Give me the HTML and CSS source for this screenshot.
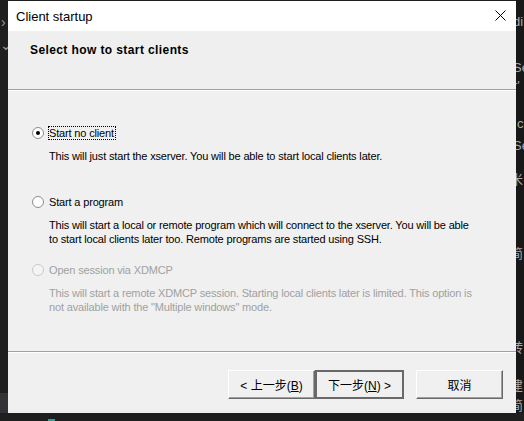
FILE: index.html
```html
<!DOCTYPE html>
<html>
<head>
<meta charset="utf-8">
<link rel="stylesheet" href="styles.css">
</head>
<body>
<div class="desktop">
  <div class="left-strip">
    <span class="chev">&#x203A;</span>
    <span class="chev down">&#x2304;</span>
    <span class="left-block"></span>
  </div>
  <div class="dialog">
    <div class="titlebar">
      <span class="title">Client startup</span>
      <svg class="close" width="11" height="11" viewBox="0 0 11 11"><path d="M0.5 0.5L10.5 10.5M10.5 0.5L0.5 10.5" stroke="#000" stroke-width="1"/></svg>
    </div>
    <div class="header">
      <div class="heading">Select how to start clients</div>
    </div>
    <div class="content">
      <div class="option o1">
        <div class="opt-row">
          <span class="radio checked"></span>
          <span class="label focus">Start no client</span>
        </div>
        <p class="desc">This will just start the xserver. You will be able to start local clients later.</p>
      </div>
      <div class="option o2">
        <div class="opt-row">
          <span class="radio"></span>
          <span class="label">Start a program</span>
        </div>
        <p class="desc">This will start a local or remote program which will connect to the xserver. You will be able<br>to start local clients later too. Remote programs are started using SSH.</p>
      </div>
      <div class="option disabled">
        <div class="opt-row">
          <span class="radio"></span>
          <span class="label">Open session via XDMCP</span>
        </div>
        <p class="desc">This will start a remote XDMCP session. Starting local clients later is limited. This option is<br>not available with the "Multiple windows" mode.</p>
      </div>
    </div>
    <div class="footer">
      <button class="btn back">&lt; 上一步(<u>B</u>)</button>
      <button class="btn default">下一步(<u>N</u>) &gt;</button>
      <button class="btn cancel">取消</button>
    </div>
  </div>
  <div class="right-strip">
    <span class="frag f1">di</span>
    <span class="frag f2">Se</span>
    <span class="frag f3">r'</span>
    <span class="frag f4">c</span>
    <span class="frag f5">Se</span>
    <span class="frag f6">米</span>
    <span class="frag f7">简</span>
    <span class="frag f8">转</span>
    <span class="frag f9">建</span>
    <span class="frag f10">简</span>
  </div>
</div>
<div class="bottom-strip"><span class="teal"></span></div>
</body>
</html>
```
FILE: styles.css
```css
* { box-sizing: border-box; }
html, body { margin: 0; padding: 0; }
body {
  width: 524px;
  height: 421px;
  overflow: hidden;
  background: #1f1f1f;
  font-family: "Liberation Sans", Arial, sans-serif;
}
.desktop {
  display: flex;
  height: 413px;
}
.left-strip {
  width: 8px;
  background: #1f1f1f;
  display: flex;
  flex-direction: column;
  color: #9a9a9a;
  font-size: 14px;
  line-height: 1;
  overflow: hidden;
  padding-top: 15px;
}
.left-strip .chev { margin-left: 1px; }
.left-strip .down { margin-top: 9px; margin-left: 0; }
.left-block {
  margin-top: auto;
  height: 20px;
  background: #333337;
}
.right-strip {
  width: 8px;
  overflow: hidden;
  background: #181818;
  color: #aaa;
  font-family: "Liberation Sans", "Noto Sans CJK SC", sans-serif;
  font-size: 13px;
  line-height: 16px;
  display: flex;
  flex-direction: column;
  padding-top: 14px;
}
.frag { white-space: nowrap; margin-left: -3px; }
.f2 { margin-top: 30px; }
.f3 { margin-top: 2px; }
.f4 { margin-top: 22px; margin-left: 1px; }
.f5 { margin-top: 6px; }
.f6 { margin-top: 18px; margin-left: -6px; }
.f7 { margin-top: 58px; margin-left: -6px; }
.f8 { margin-top: 78px; margin-left: -6px; }
.f9 { margin-top: 22px; margin-left: -6px; }
.f10 { margin-top: 4px; margin-left: -6px; }
.dialog {
  width: 508px;
  margin-top: 1px;
  height: 412px;
  background: #f0f0f0;
  display: flex;
  flex-direction: column;
}
.titlebar {
  height: 30px;
  flex: none;
  background: #fff;
  display: flex;
  align-items: center;
  justify-content: space-between;
  padding: 0 10px 0 8px;
}
.title {
  font-family: "Liberation Sans", Arial, sans-serif;
  font-size: 13px;
  color: #000;
}
.close { margin-top: -1px; }
.header {
  height: 59px;
  flex: none;
  background: #efefef;
  border-bottom: 1px solid #a0a0a0;
  box-shadow: 0 1px 0 #fff;
  padding: 12px 0 0 22px;
}
.heading {
  font-weight: bold;
  font-size: 12px;
  letter-spacing: 0.4px;
  color: #000;
}
.content {
  flex: 1;
  padding: 36px 0 0 24px;
  border-bottom: 1px solid #a0a0a0;
  font-size: 11px;
  letter-spacing: -0.16px;
  color: #000;
}
.option.o1 { height: 69px; }
.option.o2 { height: 68px; }
.option.disabled { color: #a0a0a0; }
.opt-row {
  display: flex;
  align-items: center;
  height: 14px;
}
.radio {
  width: 12px;
  height: 12px;
  border-radius: 50%;
  border: 1px solid #8d8d8d;
  background: #fff;
  position: relative;
  margin-right: 4px;
}
.radio.checked::after {
  content: "";
  position: absolute;
  left: 3px;
  top: 3px;
  width: 4px;
  height: 4px;
  border-radius: 50%;
  background: #000;
}
.disabled .radio { border-color: #c8c8c8; background: #f4f4f4; }
.label {
  padding: 0 1px 0 0;
  border: 1px dotted transparent;
  line-height: 12px;
}
.label.focus { border-color: #000; }
.desc {
  margin: 9px 0 0 17px;
  line-height: 14px;
}
.footer {
  height: 61px;
  flex: none;
  border-top: 1px solid #fff;
  display: flex;
  align-items: flex-start;
  padding: 17px 0 0 220px;
}
.btn {
  height: 29px;
  width: 87px;
  background: #f0f0f0;
  border: 1px solid;
  border-color: #fff #696969 #696969 #fff;
  box-shadow: inset -1px -1px 0 #a0a0a0;
  font-family: "Liberation Sans", "Noto Sans CJK SC", sans-serif;
  font-size: 12px;
  color: #000;
  padding: 0;
}
.btn.default {
  border: 1px solid #696969;
  outline: 1px solid #696969;
  outline-offset: -2px;
  box-shadow: none;
  width: 89px;
}
.btn.cancel { margin-left: 12px; }
.bottom-strip {
  height: 8px;
  background: #1f1f1f;
  position: relative;
}
.teal {
  position: absolute;
  left: 48px;
  top: 6px;
  width: 7px;
  height: 2px;
  background: #2aa198;
}
```
